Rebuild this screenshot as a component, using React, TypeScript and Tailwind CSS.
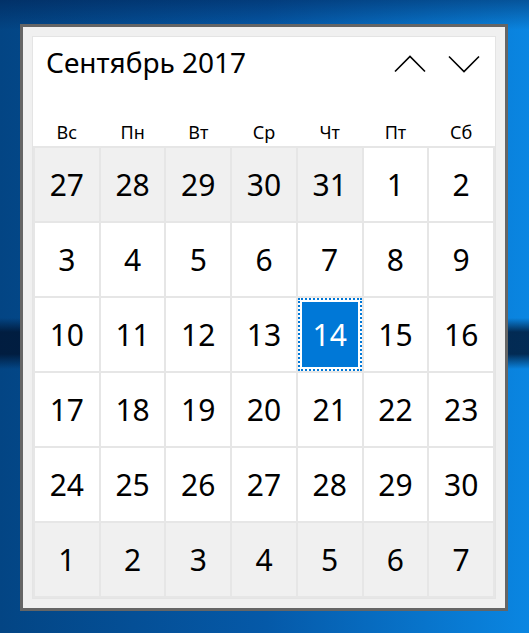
import React from 'react';

const weekDays = ['Вс', 'Пн', 'Вт', 'Ср', 'Чт', 'Пт', 'Сб'];

// 6 недель: август (хвост), сентябрь, октябрь (начало)
const days: { n: number; outside: boolean }[] = [
  ...[27, 28, 29, 30, 31].map((n) => ({ n, outside: true })),
  ...Array.from({ length: 30 }, (_, i) => ({ n: i + 1, outside: false })),
  ...[1, 2, 3, 4, 5, 6, 7].map((n) => ({ n, outside: true })),
];

const selected = 14;

const Chevron = ({ up }: { up?: boolean }) => (
  <svg width="32" height="18" viewBox="0 0 32 18" fill="none">
    <polyline
      points={up ? '1,16.5 16,1.5 31,16.5' : '1,1.5 16,16.5 31,1.5'}
      stroke="#000"
      strokeWidth="1.6"
    />
  </svg>
);

export default function App() {
  return (
    <div
      className="w-[529px] h-[633px] overflow-hidden pt-[24px] pl-[20px] bg-[linear-gradient(180deg,transparent_318px,rgba(0,18,45,0.78)_332px,rgba(0,18,45,0.78)_354px,transparent_369px),linear-gradient(180deg,rgba(0,25,70,0.45)_0px,transparent_30px),linear-gradient(90deg,#034584_0%,#0559a8_50%,#0a86e2_100%)]"
      style={{ fontFamily: '"Noto Sans", "Open Sans", sans-serif' }}
    >
      {/* окно */}
      <div className="w-[488px] border-[3px] border-[#656565] bg-[#f0f0f0] p-[9px]">
        {/* календарь */}
        <div className="border border-[#e4e4e4] bg-white">
          {/* заголовок */}
          <div className="flex justify-between">
            <div className="pl-[13px] pt-[6px] text-[28px] leading-[38px] text-black">
              Сентябрь 2017
            </div>
            <div className="flex gap-[22px] pt-[18px] pr-[15px]">
              <Chevron up />
              <Chevron />
            </div>
          </div>

          {/* дни недели */}
          <div className="mt-[39px] grid grid-cols-7 gap-[2px] px-[2px]">
            {weekDays.map((d) => (
              <div key={d} className="text-center text-[18px] leading-[24px] text-black">
                {d}
              </div>
            ))}
          </div>

          {/* сетка дней */}
          <div className="mt-[2px] grid grid-cols-7 grid-rows-[repeat(6,73px)] gap-[2px] p-[2px] bg-[#e6e6e6]">
            {days.map((d, i) =>
              !d.outside && d.n === selected ? (
                <div
                  key={i}
                  className="border-2 border-dotted border-[#0078d7] bg-white p-[2px]"
                >
                  <div className="flex h-full items-center justify-center bg-[#0078d7] text-[30px] text-white">
                    {d.n}
                  </div>
                </div>
              ) : (
                <div
                  key={i}
                  className={`flex items-center justify-center text-[30px] text-black ${
                    d.outside ? 'bg-[#f0f0f0]' : 'bg-white'
                  }`}
                >
                  {d.n}
                </div>
              )
            )}
          </div>
        </div>
      </div>
    </div>
  );
}
